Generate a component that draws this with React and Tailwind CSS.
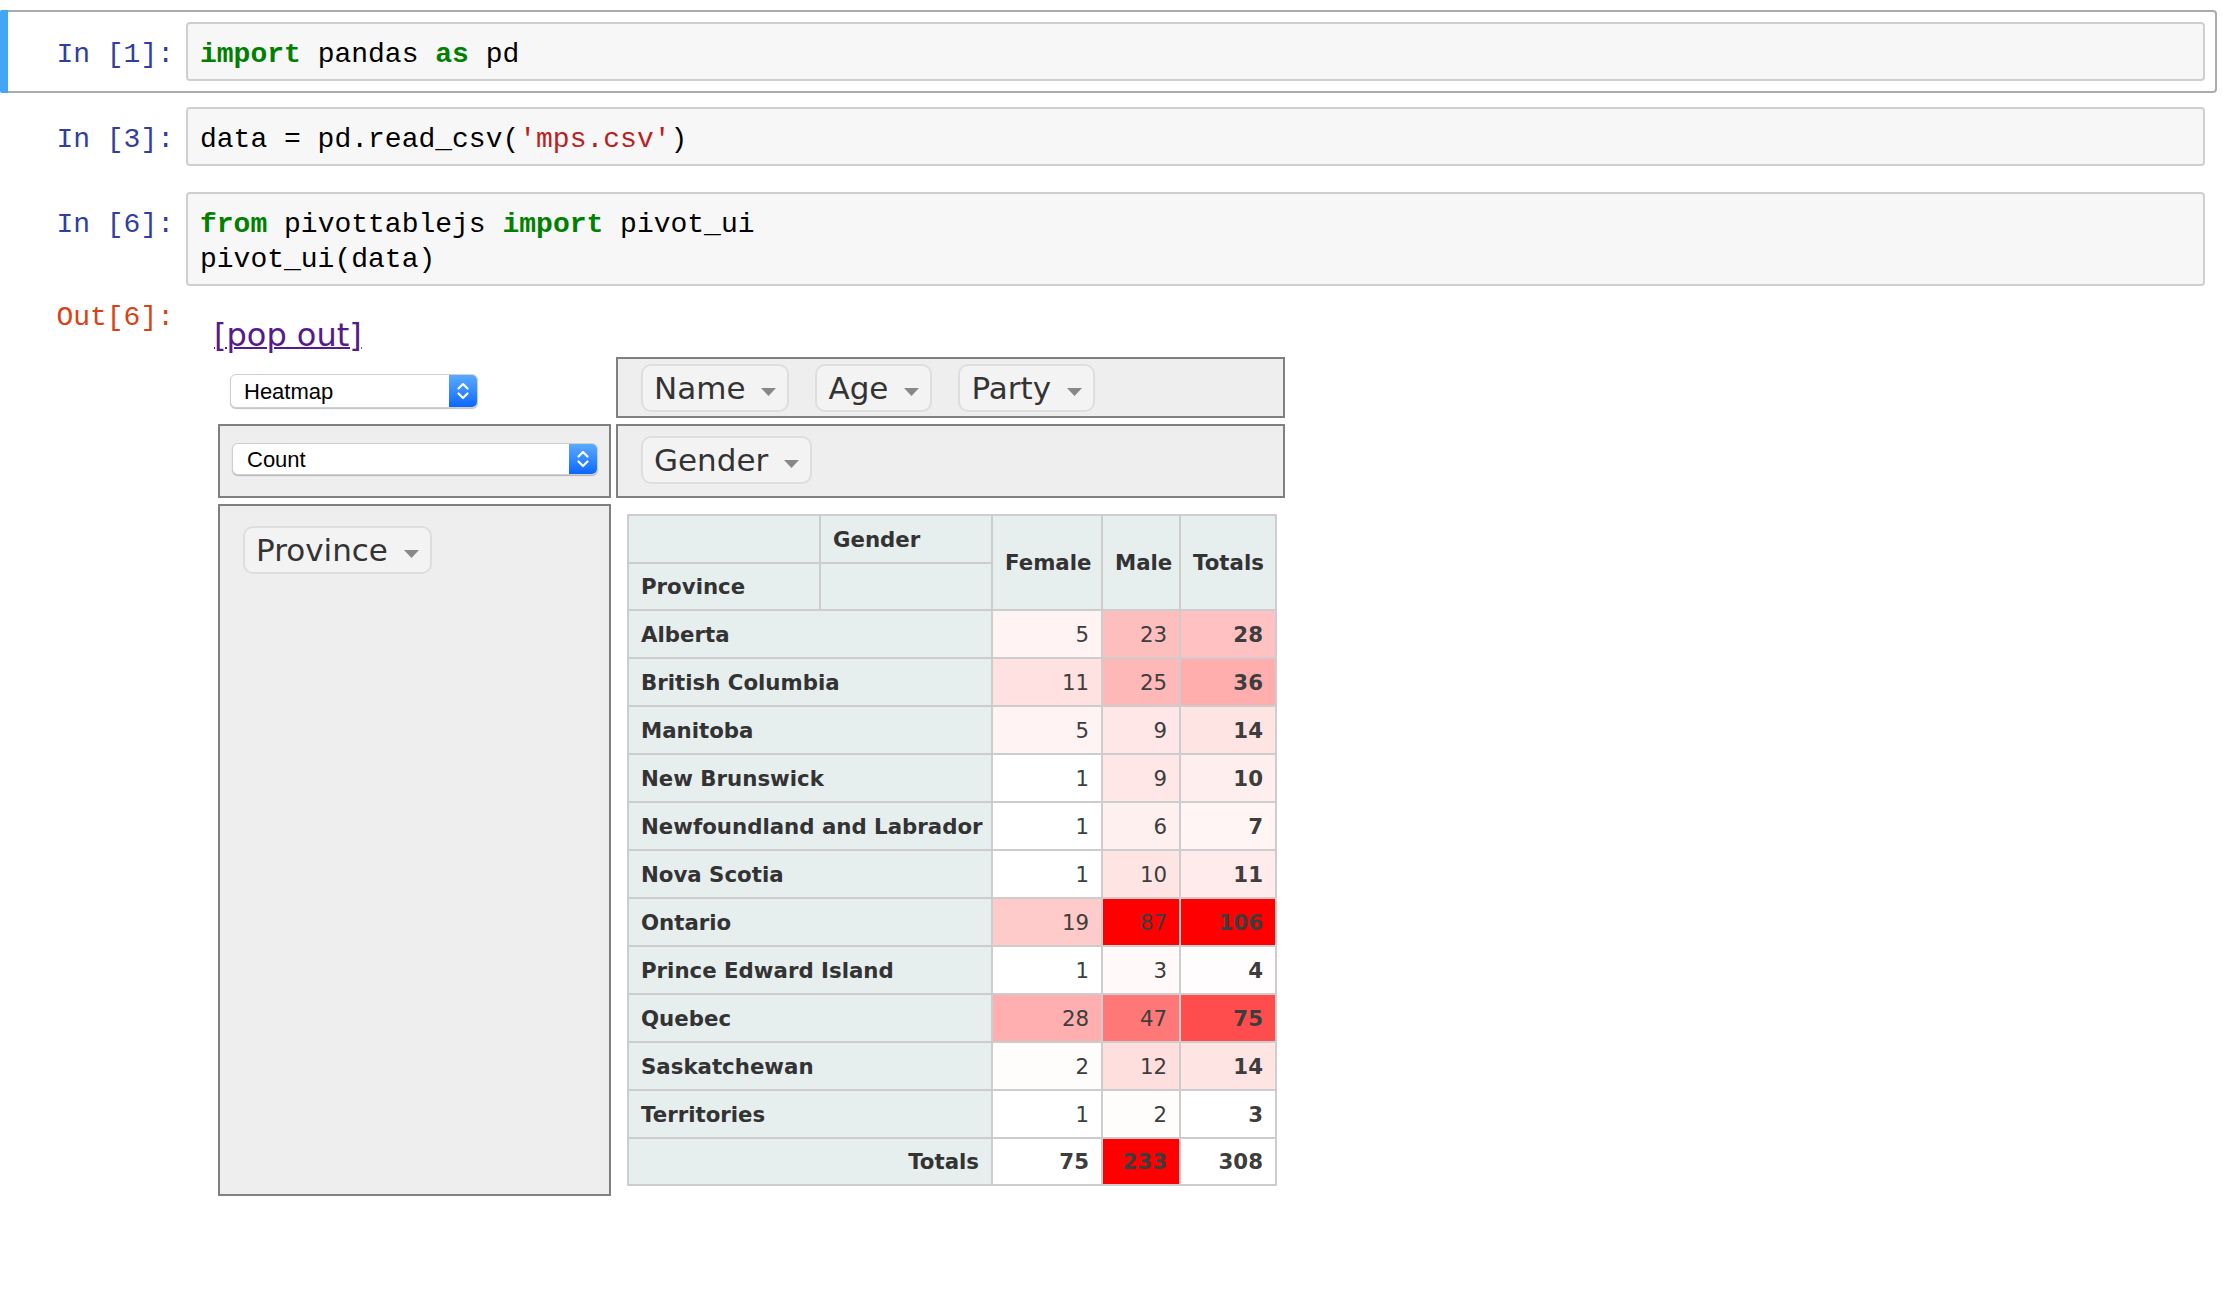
const rows = [
  ['Alberta', 5, 23, 28],
  ['British Columbia', 11, 25, 36],
  ['Manitoba', 5, 9, 14],
  ['New Brunswick', 1, 9, 10],
  ['Newfoundland and Labrador', 1, 6, 7],
  ['Nova Scotia', 1, 10, 11],
  ['Ontario', 19, 87, 106],
  ['Prince Edward Island', 1, 3, 4],
  ['Quebec', 28, 47, 75],
  ['Saskatchewan', 2, 12, 14],
  ['Territories', 1, 2, 3],
];

const bodyVals = rows.flatMap((r) => [r[1], r[2]]);
const bMin = Math.min(...bodyVals);
const bMax = Math.max(...bodyVals);
const tVals = rows.map((r) => r[3]);
const tMin = Math.min(...tVals);
const tMax = Math.max(...tVals);

function heat(x, min, max) {
  const n = 255 - Math.round((255 * (x - min)) / (max - min));
  return `rgb(255,${n},${n})`;
}

function Prompt({ children, out }) {
  return (
    <div
      className={
        out
          ? "w-[174px] shrink-0 pr-[12px] pt-[14px] text-right font-['Liberation_Mono',monospace] text-[28px] leading-[35px] text-[#D84315]"
          : "w-[174px] shrink-0 pr-[12px] pt-[15px] text-right font-['Liberation_Mono',monospace] text-[28px] leading-[35px] text-[#303F9F]"
      }
    >
      {children}
    </div>
  );
}

function CodeBox({ children }) {
  return (
    <div className="flex-1 whitespace-pre rounded-[4px] border-2 border-[#cfcfcf] bg-[#f7f7f7] pb-[7px] pl-[12px] pt-[13px] font-['Liberation_Mono',monospace] text-[28px] leading-[35px] text-black">
      {children}
    </div>
  );
}

const K = ({ children }) => <span className="font-bold text-[#008000]">{children}</span>;
const S = ({ children }) => <span className="text-[#BA2121]">{children}</span>;

function Chevrons() {
  return (
    <svg width="14" height="22" viewBox="0 0 14 22" fill="none">
      <path d="M2.5 8.5 L7 4 L11.5 8.5" stroke="white" strokeWidth="2.2" strokeLinecap="round" strokeLinejoin="round" />
      <path d="M2.5 13.5 L7 18 L11.5 13.5" stroke="white" strokeWidth="2.2" strokeLinecap="round" strokeLinejoin="round" />
    </svg>
  );
}

function Triangle() {
  return (
    <svg className="ml-[16px] mt-[8px] shrink-0" width="15" height="8" viewBox="0 0 15 8">
      <path d="M0 0 L15 0 L7.5 8 Z" fill="#888888" />
    </svg>
  );
}

function Pill({ children }) {
  return (
    <div className="inline-flex h-[48px] shrink-0 items-center rounded-[10px] border-2 border-[#dedede] bg-[#f3f3f3] px-[11px] font-['DejaVu_Sans',sans-serif] text-[31px] leading-none text-[#333333]">
      <span>{children}</span>
      <Triangle />
    </div>
  );
}

const th = "border-2 border-[#cdcdcd] bg-[#e6eeee] px-[12px] py-0 text-left align-middle font-bold text-[#333333]";
const td = "border-2 border-[#cdcdcd] px-[12px] py-0 text-right align-middle text-[#3d3d3d]";

function PivotTable() {
  return (
    <table className="w-[648px] table-fixed border-collapse border-2 border-[#cdcdcd] font-['DejaVu_Sans',sans-serif] text-[21.3px] leading-[25px]">
      <colgroup>
        <col className="w-[192px]" />
        <col className="w-[172px]" />
        <col className="w-[110px]" />
        <col className="w-[78px]" />
        <col className="w-[96px]" />
      </colgroup>
      <thead>
        <tr className="h-[48px]">
          <th className={th}></th>
          <th className={th}>Gender</th>
          <th rowSpan={2} className={th}>Female</th>
          <th rowSpan={2} className={th}>Male</th>
          <th rowSpan={2} className={th}>Totals</th>
        </tr>
        <tr className="h-[47px]">
          <th className={th}>Province</th>
          <th className={th}></th>
        </tr>
      </thead>
      <tbody>
        {rows.map((r) => (
          <tr key={r[0]} className="h-[48px]">
            <th colSpan={2} className={th + " whitespace-nowrap"}>{r[0]}</th>
            <td className={td} style={{ backgroundColor: heat(r[1], bMin, bMax) }}>{r[1]}</td>
            <td className={td} style={{ backgroundColor: heat(r[2], bMin, bMax) }}>{r[2]}</td>
            <td className={td + " font-bold"} style={{ backgroundColor: heat(r[3], tMin, tMax) }}>{r[3]}</td>
          </tr>
        ))}
        <tr className="h-[47px]">
          <th colSpan={2} className={th + " text-right"}>
            <div className="text-right">Totals</div>
          </th>
          <td className={td + " font-bold"} style={{ backgroundColor: heat(75, 75, 233) }}>75</td>
          <td className={td + " font-bold"} style={{ backgroundColor: heat(233, 75, 233) }}>233</td>
          <td className={td + " font-bold bg-white"}>308</td>
        </tr>
      </tbody>
    </table>
  );
}

export default function App() {
  return (
    <div className="min-h-[1298px] w-full bg-white pt-[10px] text-black">
      <div className="flex w-[2217px] flex-col gap-[2px]">
        {/* Cell 1 (selected) */}
        <div className="relative rounded-[4px] border-2 border-[#ababab] p-[10px]">
          <div className="absolute left-[-2px] top-[-2px] h-[calc(100%+4px)] w-[8px] rounded-l-[2px] bg-[#42A5F5]" />
          <div className="flex">
            <Prompt>In [1]:</Prompt>
            <CodeBox>
              <K>import</K> pandas <K>as</K> pd
            </CodeBox>
          </div>
        </div>

        {/* Cell 2 */}
        <div className="rounded-[4px] border-2 border-transparent p-[10px]">
          <div className="flex">
            <Prompt>In [3]:</Prompt>
            <CodeBox>
              data = pd.read_csv(<S>'mps.csv'</S>)
            </CodeBox>
          </div>
        </div>

        {/* Cell 3 */}
        <div className="rounded-[4px] border-2 border-transparent px-[10px] pt-[10px]">
          <div className="flex">
            <Prompt>In [6]:</Prompt>
            <CodeBox>
              <K>from</K> pivottablejs <K>import</K> pivot_ui
              {"\n"}pivot_ui(data)
            </CodeBox>
          </div>

          {/* Output */}
          <div className="flex">
            <Prompt out>Out[6]:</Prompt>
            <div className="flex flex-col pl-[28px]">
              <div className="mt-[31px] font-['DejaVu_Sans',sans-serif] text-[32px] leading-[37px]">
                <a className="text-[#551A8B] underline decoration-[2px]">[pop out]</a>
              </div>

              <div className="ml-[4px] mt-[3px] grid grid-cols-[393px_669px] grid-rows-[61px_74px_692px] gap-x-[5px] gap-y-[6px]">
                {/* renderer */}
                <div className="pl-[12px] pt-[17px]">
                  <div className="flex h-[34px] w-[248px] overflow-hidden rounded-[6px] border border-[#cfcfcf] bg-white shadow-[0_1px_1px_rgba(0,0,0,0.25)]">
                    <div className="flex flex-1 items-center pl-[13px] font-['Liberation_Sans',Arial,sans-serif] text-[22px] text-black">
                      Heatmap
                    </div>
                    <div className="flex w-[28px] items-center justify-center bg-gradient-to-b from-[#5aaaff] to-[#0866ff]">
                      <Chevrons />
                    </div>
                  </div>
                </div>

                {/* unused attrs */}
                <div className="flex items-start gap-[26px] border-2 border-[#808080] bg-[#eeeeee] pl-[23px] pt-[5px]">
                  <Pill>Name</Pill>
                  <Pill>Age</Pill>
                  <Pill>Party</Pill>
                </div>

                {/* aggregator */}
                <div className="border-2 border-[#808080] bg-[#eeeeee] pl-[12px] pr-[11px] pt-[17px]">
                  <div className="flex h-[32px] w-full overflow-hidden rounded-[6px] border border-[#cfcfcf] bg-white shadow-[0_1px_1px_rgba(0,0,0,0.25)]">
                    <div className="flex flex-1 items-center pl-[14px] font-['Liberation_Sans',Arial,sans-serif] text-[22px] text-black">
                      Count
                    </div>
                    <div className="flex w-[28px] items-center justify-center bg-gradient-to-b from-[#5aaaff] to-[#0866ff]">
                      <Chevrons />
                    </div>
                  </div>
                </div>

                {/* cols */}
                <div className="flex items-start border-2 border-[#808080] bg-[#eeeeee] pl-[23px] pt-[10px]">
                  <Pill>Gender</Pill>
                </div>

                {/* rows */}
                <div className="flex items-start border-2 border-[#808080] bg-[#eeeeee] pl-[23px] pt-[20px]">
                  <Pill>Province</Pill>
                </div>

                {/* table */}
                <div className="pl-[11px] pt-[10px]">
                  <PivotTable />
                </div>
              </div>
            </div>
          </div>
        </div>
      </div>
    </div>
  );
}
